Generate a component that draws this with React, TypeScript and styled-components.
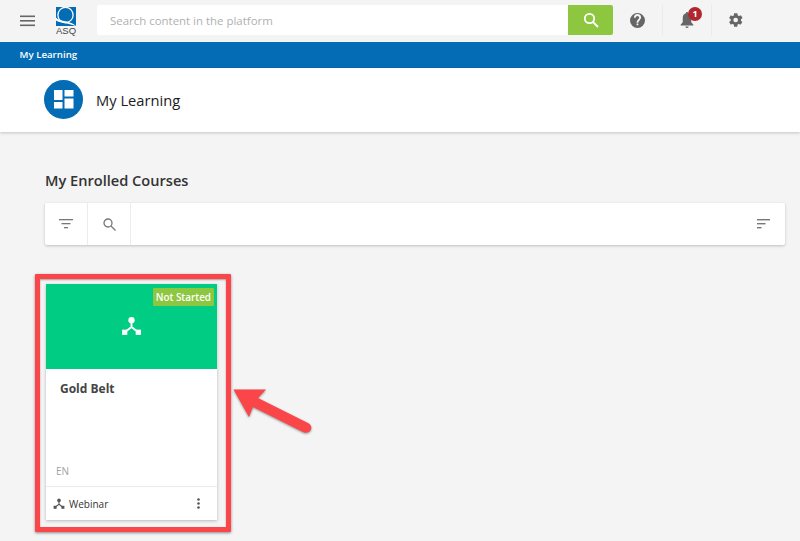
import React from "react";
import styled, { createGlobalStyle } from "styled-components";

const Global = createGlobalStyle`
  html, body { margin: 0; padding: 0; background: #f4f4f4; }
  body { font-family: "Open Sans", "Liberation Sans", sans-serif; }
  * { box-sizing: border-box; }
  svg { display: block; }
`;

const Page = styled.div`
  width: 800px;
  height: 541px;
  overflow: hidden;
  position: relative;
  background: #f4f4f4;
`;

const TopBar = styled.header`
  height: 42px;
  display: flex;
  align-items: flex-start;
  background: #f4f4f4;
`;

const MenuButton = styled.div`
  width: 56px;
  height: 42px;
  padding: 15px 0 0 20px;
  flex: none;
`;

const LogoWrap = styled.div`
  width: 41px;
  height: 42px;
  flex: none;
  padding-top: 7px;
  display: flex;
  flex-direction: column;
  align-items: flex-start;
`;

const LogoText = styled.span`
  font-family: "Liberation Sans", Arial, sans-serif;
  font-size: 9.5px;
  line-height: 10px;
  color: #444;
`;

const SearchBox = styled.div`
  margin-top: 5px;
  width: 516px;
  height: 30px;
  flex: none;
  display: flex;
  background: #fff;
  border-radius: 2px;
  overflow: hidden;
`;

const SearchText = styled.div`
  flex: 1;
  padding-left: 13px;
  font-size: 11.45px;
  line-height: 31px;
  color: #b0b0b0;
`;

const SearchButton = styled.div`
  width: 45px;
  background: #8dc63f;
  display: flex;
  align-items: center;
  justify-content: center;
`;

const ActionCell = styled.div<{ $divider?: boolean }>`
  width: 49px;
  height: 32px;
  margin-top: 4px;
  flex: none;
  display: flex;
  align-items: center;
  justify-content: center;
  position: relative;
  border-left: ${(p) => (p.$divider ? "1px solid #ebebeb" : "none")};
`;

const Badge = styled.span`
  position: absolute;
  left: 25px;
  top: 3px;
  width: 14px;
  height: 14px;
  border-radius: 50%;
  background: #b0272f;
  color: #fff;
  font-size: 9px;
  font-weight: 700;
  line-height: 14px;
  text-align: center;
`;

const NavBar = styled.nav`
  height: 26px;
  background: #046bb5;
  color: #fff;
  font-size: 9.7px;
  font-weight: 600;
  line-height: 26px;
  padding-left: 19.5px;
`;

const TitleBar = styled.div`
  height: 64px;
  background: #fff;
  display: flex;
  align-items: center;
  padding: 0 0 1px 44px;
  gap: 13px;
  box-shadow: 0 1px 3px rgba(0, 0, 0, 0.2);
  position: relative;
`;

const TitleIcon = styled.div`
  width: 39px;
  height: 39px;
  border-radius: 50%;
  background: #046bb5;
  display: flex;
  align-items: center;
  justify-content: center;
`;

const Title = styled.h1`
  margin: 0;
  font-size: 14.7px;
  font-weight: 400;
  color: #1c1c1c;
`;

const Main = styled.main`
  padding: 38px 15px 0 45px;
`;

const SectionTitle = styled.h2`
  margin: 0;
  font-size: 14.6px;
  line-height: 20px;
  font-weight: 600;
  color: #333;
`;

const Toolbar = styled.div`
  margin-top: 13px;
  height: 42px;
  background: #fff;
  border-radius: 2px;
  box-shadow: 0 1px 3px rgba(0, 0, 0, 0.22);
  display: flex;
  align-items: stretch;
`;

const ToolCell = styled.div`
  width: 43px;
  border-right: 1px solid #ececec;
  display: flex;
  align-items: center;
  justify-content: center;
`;

const ToolSpacer = styled.div`
  flex: 1;
`;

const SortCell = styled.div`
  width: 43px;
  display: flex;
  align-items: center;
  justify-content: center;
`;

const Card = styled.article`
  margin: 39px 0 0 1px;
  width: 171px;
  height: 236px;
  background: #fff;
  box-shadow: 0 1px 3px rgba(0, 0, 0, 0.25);
  display: flex;
  flex-direction: column;
`;

const CardHero = styled.div`
  height: 85px;
  flex: none;
  background: #00cc83;
  position: relative;
  display: flex;
  align-items: center;
  justify-content: center;
`;

const StatusTag = styled.span`
  position: absolute;
  top: 4px;
  right: 3px;
  height: 18px;
  padding: 0 3px;
  background: #8dc63f;
  border-radius: 1px;
  color: #fff;
  font-size: 9.9px;
  font-weight: 600;
  line-height: 18px;
`;

const CardBody = styled.div`
  flex: 1;
  padding: 11px 14px 0;
  display: flex;
  flex-direction: column;
  justify-content: space-between;
`;

const CardTitle = styled.h3`
  margin: 0;
  font-size: 12px;
  line-height: 18px;
  font-weight: 700;
  color: #444;
`;

const Lang = styled.span`
  font-size: 10px;
  line-height: 14px;
  color: #a2a2a2;
  margin: 0 0 8px -4px;
`;

const CardFooter = styled.footer`
  height: 34px;
  flex: none;
  border-top: 1px solid #ececec;
  display: flex;
  align-items: center;
  padding: 0 17px 0 7px;
  gap: 4px;
  font-size: 10px;
  color: #333;
`;

const FooterLabel = styled.span`
  flex: 1;
`;

const Highlight = styled.div`
  position: absolute;
  left: 35px;
  top: 274px;
  width: 196px;
  height: 258px;
  border: 5px solid #fa4549;
  border-radius: 1px;
  box-shadow: 0 1px 3px rgba(0, 0, 0, 0.45), inset 0 1px 2px rgba(0, 0, 0, 0.35);
  pointer-events: none;
`;

const Arrow = styled.svg`
  position: absolute;
  left: 228px;
  top: 384px;
`;

const NodesIcon = ({ size, color }: { size: number; color: string }) => (
  <svg width={size} height={size} viewBox="0 0 20 20" fill={color}>
    <circle cx="10" cy="4" r="3" />
    <rect x="1" y="13" width="5" height="5" />
    <rect x="14" y="13" width="5" height="5" />
    <path d="M10 4V10.500L3.500 15.500M10 10.500L16.500 15.500" fill="none" stroke={color} strokeWidth="1.800" />
  </svg>
);

export default function App() {
  return (
    <Page>
      <Global />
      <TopBar>
        <MenuButton>
          <svg width="15" height="12" viewBox="0 0 15 12" fill="#666">
            <rect y="0.500" width="15" height="1.600" />
            <rect y="5" width="15" height="1.600" />
            <rect y="9.500" width="15" height="1.600" />
          </svg>
        </MenuButton>
        <LogoWrap>
          <svg width="20" height="19" viewBox="0 0 20 19">
            <rect width="20" height="19" fill="#046bb5" />
            <circle cx="9.500" cy="8" r="7.600" fill="none" stroke="#fff" strokeWidth="1.300" />
            <path d="M0 10.500 C 4 15 11 12.500 19 18 L 20 19 L 12 16.800 C 7 15.800 3 15.500 0 13.500 Z" fill="#fff" />
          </svg>
          <LogoText>ASQ</LogoText>
        </LogoWrap>
        <SearchBox>
          <SearchText>Search content in the platform</SearchText>
          <SearchButton>
            <svg width="16" height="16" viewBox="0 0 16 16" fill="none" stroke="#fff" strokeWidth="1.800">
              <circle cx="6.500" cy="6.500" r="4.700" />
              <path d="M10 10l5 5" />
            </svg>
          </SearchButton>
        </SearchBox>
        <ActionCell>
          <svg width="15" height="15" viewBox="0 0 24 24" fill="#666">
            <path d="M12 0a12 12 0 1 0 0 24 12 12 0 0 0 0-24zm1.300 19.500h-2.800v-2.800h2.800zm2.800-8.500-1.200 1.200c-1 1-1.500 1.700-1.500 3.300h-2.800v-.7c0-1.500.6-2.800 1.600-3.800l1.700-1.800c.5-.5.800-1.100.8-1.800a2.800 2.800 0 0 0-5.600 0H6.300a5.700 5.700 0 0 1 11.400 0c0 1-.6 1.900-1.600 2.600z" />
          </svg>
        </ActionCell>
        <ActionCell $divider>
          <svg width="14" height="16" viewBox="0 0 13 15" fill="#666">
            <path d="M6.500 0C7.200 0 7.500.5 7.500 1.200 9.700 1.700 10.500 3.600 10.500 6v3.500L12.500 12v.6H.5V12l2-2.500V6c0-2.400.8-4.300 3-4.800C5.500.5 5.800 0 6.500 0z" />
            <path d="M5 13.500h3A1.500 1.500 0 0 1 5 13.500z" />
          </svg>
          <Badge>1</Badge>
        </ActionCell>
        <ActionCell $divider>
          <svg width="16" height="16" viewBox="0 0 24 24" fill="#666">
            <path d="M19.400 13c.1-.3.100-.7.100-1s0-.7-.1-1l2.100-1.600c.2-.2.200-.4.100-.6l-2-3.500c-.1-.2-.4-.3-.6-.2l-2.500 1c-.5-.4-1.100-.7-1.700-1L14 2.400c0-.2-.2-.4-.5-.4h-4c-.2 0-.4.200-.5.400L8.700 5.100c-.6.300-1.200.6-1.700 1l-2.500-1c-.2-.1-.5 0-.6.200l-2 3.500c-.1.200-.1.400.1.600L4.100 11c-.1.300-.1.700-.1 1s0 .7.100 1L2 14.600c-.2.200-.2.400-.1.600l2 3.500c.1.200.4.300.6.2l2.500-1c.5.400 1.100.7 1.700 1l.3 2.700c.1.200.3.400.5.400h4c.3 0 .5-.2.500-.4l.4-2.700c.6-.3 1.200-.6 1.700-1l2.500 1c.2.100.5 0 .6-.2l2-3.500c.1-.2.100-.4-.1-.6zM11.500 15.500a3.500 3.500 0 1 1 0-7 3.500 3.500 0 0 1 0 7z" />
          </svg>
        </ActionCell>
      </TopBar>
      <NavBar>My Learning</NavBar>
      <TitleBar>
        <TitleIcon>
          <svg width="20" height="19" viewBox="0 0 20 19" fill="#fff">
            <rect x="0" y="0" width="8.500" height="10" />
            <rect x="0" y="12" width="8.500" height="6.500" />
            <rect x="10.500" y="0" width="9" height="6.500" />
            <rect x="10.500" y="8.500" width="9" height="10" />
          </svg>
        </TitleIcon>
        <Title>My Learning</Title>
      </TitleBar>
      <Main>
        <SectionTitle>My Enrolled Courses</SectionTitle>
        <Toolbar>
          <ToolCell>
            <svg width="14" height="10" viewBox="0 0 14 10" fill="#777">
              <rect width="14" height="1.300" />
              <rect x="2.500" y="4" width="9" height="1.300" />
              <rect x="5" y="8" width="4" height="1.300" />
            </svg>
          </ToolCell>
          <ToolCell>
            <svg width="13" height="13" viewBox="0 0 13 13" fill="none" stroke="#777" strokeWidth="1.300">
              <circle cx="5" cy="5" r="4" />
              <path d="M8 8l4.500 4.500" />
            </svg>
          </ToolCell>
          <ToolSpacer />
          <SortCell>
            <svg width="13" height="10" viewBox="0 0 13 10" fill="#777">
              <rect width="13" height="1.400" />
              <rect y="4" width="8.500" height="1.400" />
              <rect y="8" width="4.500" height="1.400" />
            </svg>
          </SortCell>
        </Toolbar>
        <Card>
          <CardHero>
            <NodesIcon size={21} color="#fff" />
            <StatusTag>Not Started</StatusTag>
          </CardHero>
          <CardBody>
            <CardTitle>Gold Belt</CardTitle>
            <Lang>EN</Lang>
          </CardBody>
          <CardFooter>
            <NodesIcon size={12} color="#555" />
            <FooterLabel>Webinar</FooterLabel>
            <svg width="3" height="11" viewBox="0 0 3 11" fill="#555">
              <circle cx="1.500" cy="1.500" r="1.300" />
              <circle cx="1.500" cy="5.500" r="1.300" />
              <circle cx="1.500" cy="9.500" r="1.300" />
            </svg>
          </CardFooter>
        </Card>
      </Main>
      <Highlight />
      <Arrow width="90" height="52" viewBox="0 0 90 52">
        <path
          d="M5.500 5.500 L38 5.500 L30 14 L80 39 C 84 41 84 45 82 47 C 80 49 77 49 75 48 L 25 23 L 21 33 Z"
          fill="#fa4549"
          style={{ filter: "drop-shadow(0 1px 1px rgba(0,0,0,.4))" }}
        />
      </Arrow>
    </Page>
  );
}
